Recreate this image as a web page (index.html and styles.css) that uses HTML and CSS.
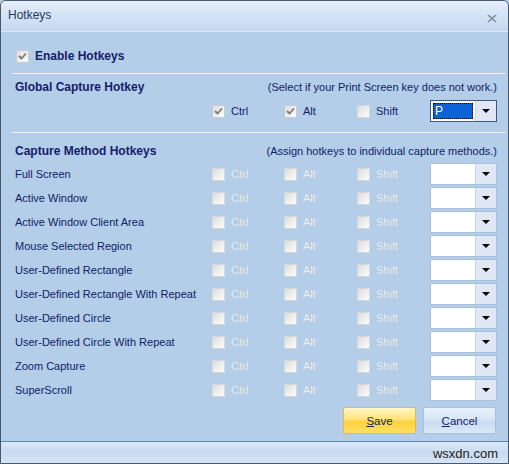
FILE: index.html
```html
<!DOCTYPE html>
<html>
<head>
<meta charset="utf-8">
<link rel="stylesheet" href="styles.css">
</head>
<body>
<div class="window">
  <div class="titlebar">
    <span class="title">Hotkeys</span>
    <svg class="close" width="10" height="9" viewBox="0 0 10 9"><path d="M1 1 L9 8 M9 1 L1 8" stroke="#7f8b99" stroke-width="1.6" fill="none"/></svg>
  </div>
  <div class="main">
    <div class="enable">
      <span class="cb checked"><svg width="9" height="8" viewBox="0 0 9 8"><path d="M1 4 L3.5 6.5 L8 1.5" stroke="#7a7a7a" stroke-width="1.8" fill="none"/></svg></span>
      <span class="bold">Enable Hotkeys</span>
    </div>
    <div class="sep"></div>
    <div class="head">
      <span class="bold">Global Capture Hotkey</span>
      <span class="note">(Select if your Print Screen key does not work.)</span>
    </div>
    <div class="grid">
      <span></span>
      <span class="opt"><span class="cb checked"><svg width="9" height="8" viewBox="0 0 9 8"><path d="M1 4 L3.5 6.5 L8 1.5" stroke="#7a7a7a" stroke-width="1.8" fill="none"/></svg></span>Ctrl</span>
      <span class="opt"><span class="cb checked"><svg width="9" height="8" viewBox="0 0 9 8"><path d="M1 4 L3.5 6.5 L8 1.5" stroke="#7a7a7a" stroke-width="1.8" fill="none"/></svg></span>Alt</span>
      <span class="opt"><span class="cb"></span>Shift</span>
      <span class="dd focus"><span class="val"><span class="sel">P</span></span><span class="btn"><i class="tri"></i></span></span>
    </div>
    <div class="sep sep2"></div>
    <div class="head head2">
      <span class="bold">Capture Method Hotkeys</span>
      <span class="note">(Assign hotkeys to individual capture methods.)</span>
    </div>
    <div class="grid" id="rows"></div>
    <div class="buttons">
      <button class="button save"><u>S</u>ave</button>
      <button class="button cancel"><u>C</u>ancel</button>
    </div>
  </div>
  <div class="footer"><span class="mark">wsxdn.com</span></div>
</div>
<script>
var names=["Full Screen","Active Window","Active Window Client Area","Mouse Selected Region","User-Defined Rectangle","User-Defined Rectangle With Repeat","User-Defined Circle","User-Defined Circle With Repeat","Zoom Capture","SuperScroll"];
var g=document.getElementById("rows");
names.forEach(function(n){
  g.insertAdjacentHTML("beforeend",
  '<span class="label">'+n+'</span>'+
  '<span class="opt dis"><span class="cb"></span>Ctrl</span>'+
  '<span class="opt dis"><span class="cb"></span>Alt</span>'+
  '<span class="opt dis"><span class="cb"></span>Shift</span>'+
  '<span class="dd"><span class="val"></span><span class="btn"><i class="tri"></i></span></span>');
});
</script>
</body>
</html>
```
FILE: styles.css
```css
html, body { margin: 0; padding: 0; background: #b4cde9; }
.window {
  width: 509px; height: 464px; box-sizing: border-box;
  border: 1px solid #45586f; border-radius: 6px 6px 0 0;
  background: #b4cde9; display: flex; flex-direction: column;
  font-family: "Liberation Sans", Arial, sans-serif; font-size: 11px; color: #0f2266;
  overflow: hidden;
}
.titlebar {
  height: 31px; box-sizing: border-box; flex: none;
  background: linear-gradient(#e6eefa, #d5e3f5 45%, #c6d9f0);
  border-bottom: 1px solid #dfe9f6;
  display: flex; align-items: center; justify-content: space-between;
  padding: 0 11px 0 7px;
}
.title { font-size: 12px; color: #1f3b5e; margin-top: -2px; }
.close { margin-top: 4px; }
.main { flex: 1; display: flex; flex-direction: column; padding: 0 11px 0 14px; }
.bold { font-weight: bold; font-size: 12px; color: #14216a; }
.enable { display: flex; align-items: center; height: 24px; margin-top: 12px; padding-left: 1px; gap: 6px; }
.sep { height: 1px; border-bottom: 1px solid #eef3fa; background: #c3ccd8; margin: 4px -8px 0 -3px; }
.sep2 { margin-top: 8px; }
.head { display: flex; justify-content: space-between; align-items: center; height: 24px; margin-top: 1px; }
.head2 { margin-top: 6px; height: 23px; }
.note { font-size: 11px; color: #0f2266; }
.grid { display: grid; grid-template-columns: 197px 72px 73px 73px 67px; grid-auto-rows: 24px; align-items: center; }
.label { color: #0f2266; white-space: nowrap; }
.opt { display: flex; align-items: center; gap: 6px; color: #14216a; }
.opt.dis { color: #eef1f5; text-shadow: 0 0 1px #a9b4c4; }
.cb {
  width: 13px; height: 13px; box-sizing: border-box; flex: none;
  border: 1px solid #d3d9e1;
  background: linear-gradient(135deg, #dcdcdc, #f4f4f4 70%, #fbfbfb);
  display: inline-flex; align-items: center; justify-content: center;
}
.cb.checked { border-color: #c9cdd3; }
.dd {
  height: 22px; box-sizing: border-box; display: flex;
  border: 1px solid #a9bfdc; background: #fff;
}
.dd .val { flex: 1; display: flex; padding: 2px; }
.dd .btn {
  width: 20px; background: #dfe8f4; border-left: 1px solid #c7d5e8;
  display: flex; align-items: center; justify-content: center;
}
.tri { width: 0; height: 0; border-left: 4px solid transparent; border-right: 4px solid transparent; border-top: 4px solid #000; }
.dd.focus { border-color: #3a5a84; }
.dd.focus .sel {
  flex: 1; background: #0b63d7; color: #fff; outline: 1px dotted #000; outline-offset: -1px;
  font-size: 12px; line-height: 16px; padding-left: 2px;
}
.buttons { display: flex; justify-content: flex-end; gap: 7px; margin-top: 5px; margin-right: 1px; }
.button {
  width: 73px; height: 27px; font-family: inherit; font-size: 11.5px; color: #14216a;
  border-radius: 2px; padding: 0;
}
.save { background: linear-gradient(#fff7c8, #ffe27a 45%, #ffd23a 55%, #ffdf6a); border: 1px solid #e3b94c; }
.cancel { background: linear-gradient(#eaf2fb, #d7e6f6 45%, #c9dcf1 55%, #dbe8f6); border: 1px solid #a9c0dd; }
.footer {
  height: 22px; box-sizing: border-box; flex: none;
  border-top: 1px solid #6385b2;
  background: linear-gradient(#dce8f6, #c9dbf0 50%, #d6e4f5);
  display: flex; justify-content: flex-end; align-items: center; padding-right: 10px;
}
.mark { font-size: 13px; color: #1c1c1c; margin-top: 2px; }
```
